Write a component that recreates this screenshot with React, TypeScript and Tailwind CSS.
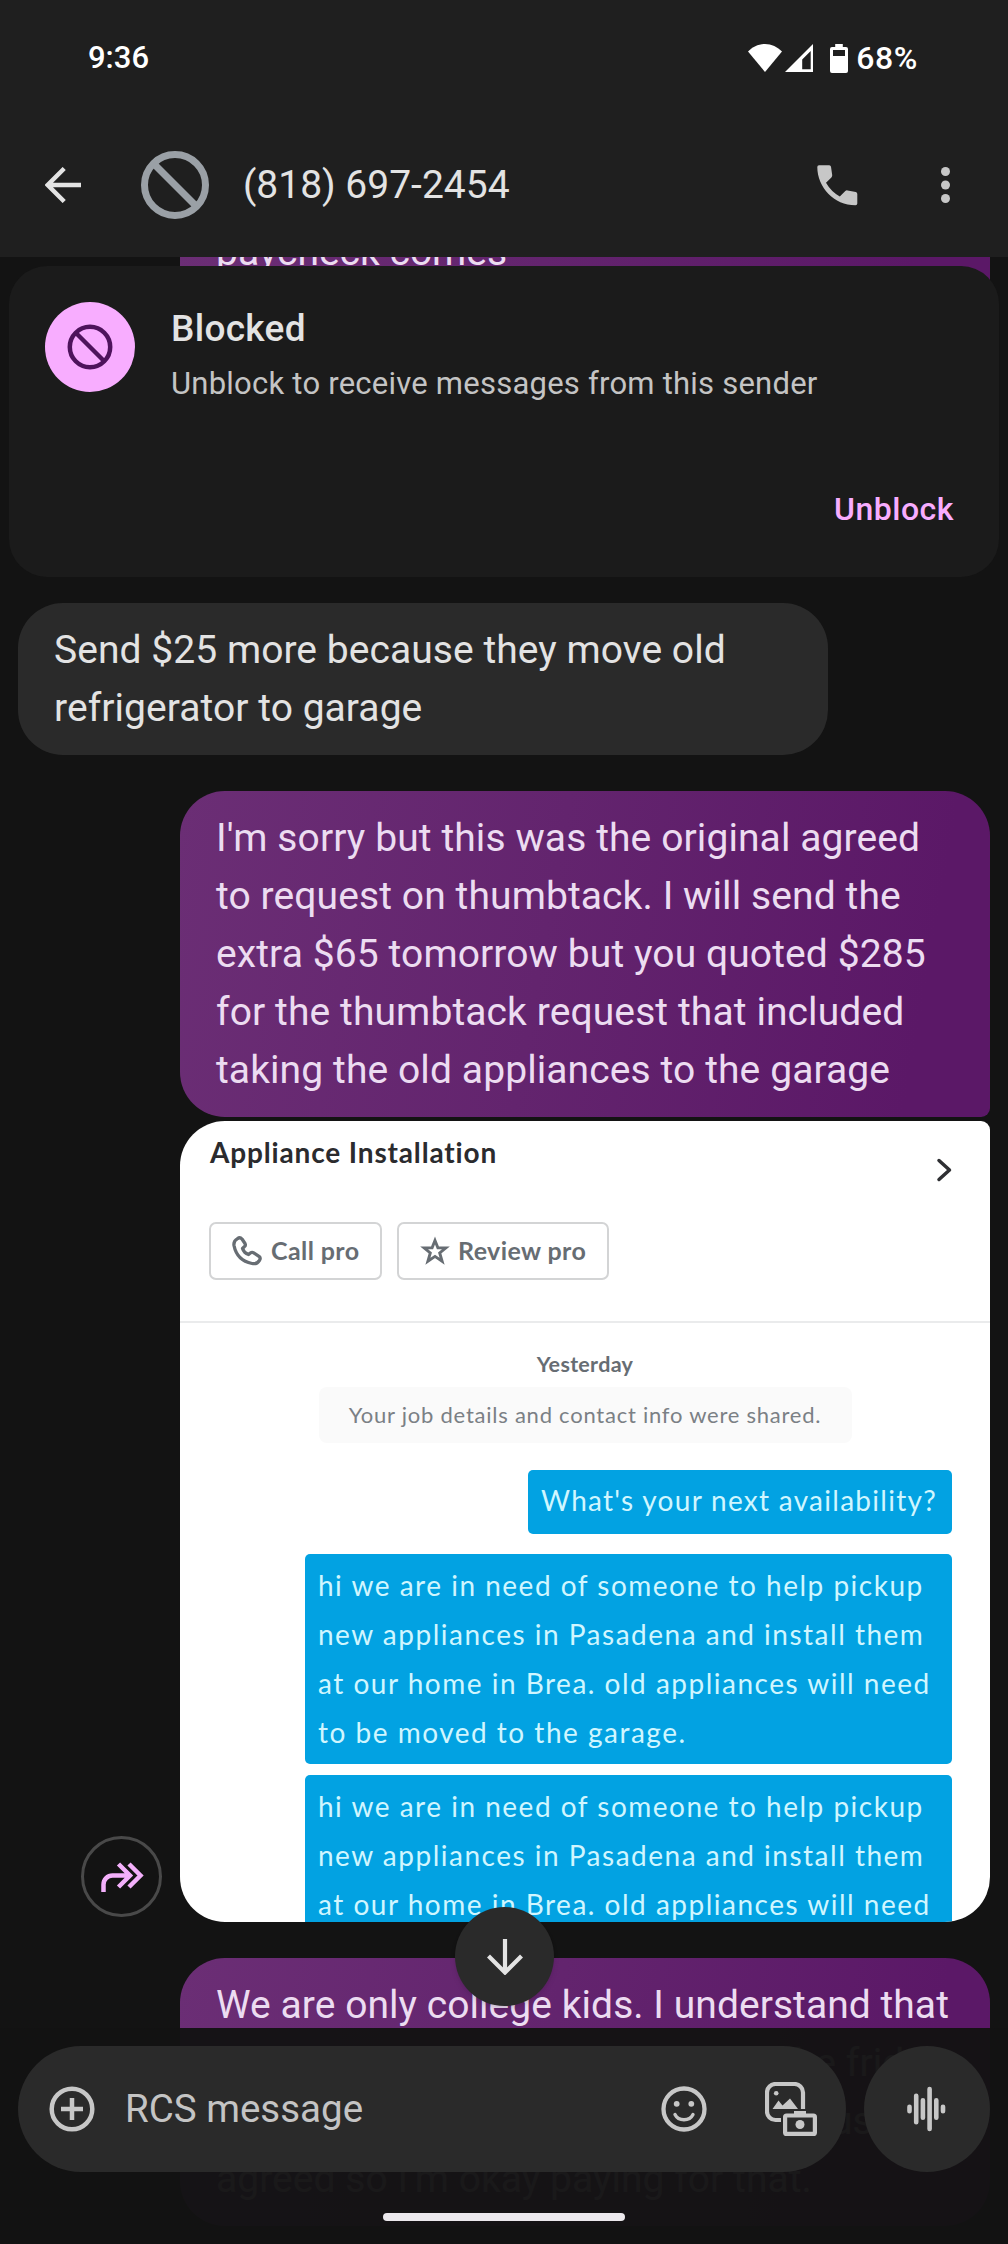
import React from "react";

const purple = "bg-[linear-gradient(100deg,#6b2e75_0%,#63246e_45%,#5b1867_90%)] text-[#ecdcf1]";

const Lines = ({ lines }: { lines: string[] }) => (
  <>
    {lines.map((line) => (
      <p key={line} className="whitespace-nowrap">
        {line}
      </p>
    ))}
  </>
);

const StatusBar = () => (
  <div className="flex h-[116px] items-center justify-between pl-[88px] pr-[90px] text-[31px] font-medium text-white">
    <span>9:36</span>
    <div className="flex items-center">
      <svg width="34" height="28" viewBox="0 0 34 28" fill="#fff">
        <path d="M17 28 0 7.5C4.500 3 10.500 0 17 0s12.500 3 17 7.500z" />
      </svg>
      <svg className="ml-[3px]" width="28" height="28" viewBox="0 0 28 28">
        <path fill="#fff" fillRule="evenodd" d="M28 0v28H0zM25.700 7 17.200 15.500v9.700h8.500z" />
      </svg>
      <svg className="ml-[17px]" width="18" height="29" viewBox="0 0 18 29">
        <path
          fill="#fff"
          fillRule="evenodd"
          d="M5.200 0h7.600v3H16a2 2 0 0 1 2 2v22a2 2 0 0 1-2 2H2a2 2 0 0 1-2-2V5a2 2 0 0 1 2-2h3.200zM3 6v6h12V6z"
        />
      </svg>
      <span className="ml-[8px] text-[32px] tracking-[0.600px]">68%</span>
    </div>
  </div>
);

const Header = () => (
  <header className="h-[257px] bg-[#1f1f1f]">
    <StatusBar />
    <div className="flex h-[138px] items-center pl-[45px] pr-[58px]">
      <svg width="36" height="36" viewBox="0 0 36 36" fill="none" stroke="#e3e3e3" strokeWidth="4.400">
        <path d="M36 18H3M19.200 1.500 2.700 18l16.500 16.500" />
      </svg>
      <svg className="ml-[60px]" width="68" height="68" viewBox="0 0 68 68" fill="none" stroke="#9aa0a6" strokeWidth="7">
        <circle cx="34" cy="34" r="30.500" />
        <path d="m12.500 12.500 43 43" />
      </svg>
      <h1 className="ml-[34px] text-[39px] text-[#e3e3e3]">(818) 697-2454</h1>
      <svg className="ml-auto" width="41" height="41" viewBox="0 0 41 41" fill="#c7c7c7">
        <path d="M2 .3H12.300Q13.700.3 14 1.800L15.200 10Q15.400 11.400 14.400 12.400L9 17.800Q14 26.500 22.800 31.600L28.300 26Q29.300 25.100 30.600 25.400L38.800 27Q40.300 27.400 40.300 28.900V38.500Q40.300 40.300 38.500 40.300C17 40.300.3 22 .3 2Q.3.3 2 .3Z" />
      </svg>
      <svg className="ml-[83px]" width="9" height="36" viewBox="0 0 9 36" fill="#c7c7c7">
        <circle cx="4.500" cy="4.500" r="4.500" />
        <circle cx="4.500" cy="18" r="4.500" />
        <circle cx="4.500" cy="31.500" r="4.500" />
      </svg>
    </div>
  </header>
);

const BlockedCard = () => (
  <section className="relative mx-[9px] -mt-[29px] flex h-[311px] rounded-[38px] bg-[#1b1b1b] pl-9 pr-[45px] pt-9">
    <div className="flex size-[90px] items-center justify-center rounded-full bg-[#f8adff]">
      <svg width="46" height="46" viewBox="0 0 46 46" fill="none" stroke="#4e135c" strokeWidth="4.500">
        <circle cx="23" cy="23" r="20.200" />
        <path d="m9 9 28 28" />
      </svg>
    </div>
    <div className="ml-9 flex flex-1 flex-col pt-[3px]">
      <h2 className="text-[37px] leading-[48px] font-medium tracking-[0.300px] text-[#e3e3e3]">Blocked</h2>
      <p className="mt-[9px] text-[31px] leading-[44px] tracking-[0.230px] text-[#c4c4c4]">
        Unblock to receive messages from this sender
      </p>
      <button className="mt-[83px] self-end text-[32px] leading-[40px] font-medium tracking-[0.500px] text-[#f8adff]">
        Unblock
      </button>
    </div>
  </section>
);

const requestLines = [
  "hi we are in need of someone to help pickup",
  "new appliances in Pasadena and install them",
  "at our home in Brea. old appliances will need",
  "to be moved to the garage.",
];

const Attachment = () => (
  <div className="flex h-[801px] w-[810px] flex-col overflow-hidden rounded-[45px] rounded-tr-[9px] bg-white font-['Lato',sans-serif]">
    <div className="flex h-[101px] shrink-0 justify-between pl-[30px] pr-[37px]">
      <h3 className="pt-[15px] text-[28px] leading-[32px] font-bold tracking-[0.850px] text-[#2b2b2e]">
        Appliance Installation
      </h3>
      <svg className="mt-[37px]" width="17" height="24" viewBox="0 0 17 24" fill="none" stroke="#2f3033" strokeWidth="3.500" strokeLinecap="round" strokeLinejoin="round">
        <path d="m3 2.500 10.500 9.500L3 21.500" />
      </svg>
    </div>
    <div className="flex gap-[15px] pl-[29px] text-[25px] font-bold tracking-[0.400px] text-[#676d73]">
      <div className="flex h-[58px] w-[173px] items-center gap-[9px] rounded-[7px] border-2 border-[#d3d4d5] pl-[21px]">
        <svg width="30" height="30" viewBox="0 0 30 30" fill="none" stroke="#676d73" strokeWidth="3.300" strokeLinejoin="round">
          <path d="M5.500 2.600Q8 .8 10 3L13 7.500Q14 9.500 12.300 10.800L10.500 12.500Q12 17 16.500 18.500L18.300 17Q20 15.800 21.700 16.800L27 20.300Q29 22 27.500 24.300Q25 28.500 20 27.500Q5 24.500 2 9.500Q1.300 5 5.500 2.600Z" />
        </svg>
        <span className="whitespace-nowrap">Call pro</span>
      </div>
      <div className="flex h-[58px] w-[212px] items-center gap-[8px] rounded-[7px] border-2 border-[#d3d4d5] pl-[21px]">
        <svg width="30" height="30" viewBox="0 0 30 30" fill="none" stroke="#676d73" strokeWidth="2.900">
          <path d="m15 4.500 2.900 7.200 8 .1-6.200 5.200 2.400 8.200-7.100-4.800-7.100 4.800 2.400-8.200-6.200-5.200 8-.1z" />
        </svg>
        <span className="whitespace-nowrap">Review pro</span>
      </div>
    </div>
    <hr className="mt-[41px] border-0 border-t-2 border-[#eaebec]" />
    <div className="flex flex-col items-center pt-[26px]">
      <p className="text-[21.500px] leading-[30px] font-bold tracking-[0.300px] text-[#676d73]">Yesterday</p>
      <p className="mt-2 h-14 w-[533px] rounded-lg bg-[#fafafa] text-center text-[22px] leading-[56px] tracking-[0.760px] text-[#7b8085]">
        Your job details and contact info were shared.
      </p>
    </div>
    <div className="mt-[27px] flex flex-col items-end pr-[38px] text-[28px] leading-[49px] tracking-[1.500px] text-[#d0f6ff]">
      <p className="h-16 w-[424px] rounded-[5px] bg-[#02a2e2] px-[13px] pt-[6px] tracking-[1.280px] whitespace-nowrap">
        What's your next availability?
      </p>
      <div className="mt-5 h-[210px] w-[647px] rounded-[5px] bg-[#02a2e2] px-[13px] pt-[7px]">
        <Lines lines={requestLines} />
      </div>
      <div className="mt-[11px] h-[210px] w-[647px] rounded-[5px] bg-[#02a2e2] px-[13px] pt-[7px]">
        <Lines lines={requestLines} />
      </div>
    </div>
  </div>
);

const ShareButton = () => (
  <button className="mb-[5px] flex size-[81px] items-center justify-center rounded-full border-3 border-[#494949]">
    <svg className="shrink-0" width="76" height="76" viewBox="0 0 76 76" fill="none" stroke="#f3b0fb" strokeWidth="4.500">
      <path d="M19.500 53V45.500a9 9 0 0 1 9-9H47M34.500 25 46 36.500 34.500 48M45 25l11.500 11.500L45 48" />
    </svg>
  </button>
);

const Conversation = () => (
  <main className="flex flex-col">
    <div className="ml-[180px] h-[38px] w-[810px] overflow-hidden">
      <div className={`${purple} -mt-[34px] h-[75px] pl-9 text-[39px] leading-[58px]`}>paycheck comes</div>
    </div>
    <BlockedCard />
    <div className="mt-[26px] ml-[18px] h-[152px] w-[810px] rounded-[45px] bg-[#2a2a2a] py-[18px] pl-9 text-[39px] leading-[58px] tracking-[0.050px] text-[#e3e3e3]">
      <Lines lines={["Send $25 more because they move old", "refrigerator to garage"]} />
    </div>
    <div
      className={`${purple} mt-9 ml-[180px] w-[810px] rounded-[45px] rounded-br-[9px] py-[18px] pl-9 text-[39px] leading-[58px] tracking-[0.100px]`}
    >
      <Lines
        lines={[
          "I'm sorry but this was the original agreed",
          "to request on thumbtack. I will send the",
          "extra $65 tomorrow but you quoted $285",
          "for the thumbtack request that included",
          "taking the old appliances to the garage",
        ]}
      />
    </div>
    <div className="mt-1 ml-[81px] flex items-end gap-[18px]">
      <ShareButton />
      <Attachment />
    </div>
    <div className={`${purple} mt-9 ml-[180px] h-[268px] w-[810px] rounded-[45px] py-[18px] pl-9 text-[39px] leading-[58px] tracking-[0.050px]`}>
      <p>We are only college kids. I understand that</p>
      <p className="pl-[565px]">the frid</p>
      <p className="pl-[615px]">us</p>
      <p>agreed so I'm okay paying for that.</p>
    </div>
  </main>
);

// Sits over the tail of the conversation, which shows faintly through it.
const Composer = () => (
  <footer className="absolute inset-x-0 bottom-0 flex h-[216px] flex-col items-center bg-[#131313]/97 pt-[18px]">
    <div className="flex w-[972px] justify-between">
      <div className="flex h-[126px] w-[828px] items-center rounded-full bg-[#2a2a2a] pl-[31px] pr-[29px]">
        <svg width="46" height="46" viewBox="0 0 46 46" fill="none" stroke="#c7c7c7" strokeWidth="4.500">
          <circle cx="23" cy="23" r="20.300" />
          <path d="M23 12v22M12 23h22" />
        </svg>
        <span className="ml-[30px] flex-1 text-[38.500px] text-[#c4c4c4]">RCS message</span>
        <svg width="46" height="46" viewBox="0 0 46 46" fill="none" stroke="#c7c7c7" strokeWidth="4.300">
          <circle cx="23" cy="23" r="20.500" />
          <circle cx="15.700" cy="17.800" r="2.900" fill="#c7c7c7" stroke="none" />
          <circle cx="30.300" cy="17.800" r="2.900" fill="#c7c7c7" stroke="none" />
          <path d="M14 28.500c3.500 7 14.500 7 18 0" strokeWidth="3.400" strokeLinecap="round" />
        </svg>
        <svg className="ml-[58px]" width="52" height="54" viewBox="0 0 52 54" fill="none" stroke="#c7c7c7" strokeWidth="4.200">
          <path d="M38 27V10.500A8.500 8.500 0 0 0 29.500 2H10.500A8.500 8.500 0 0 0 2 10.500V29.500A8.500 8.500 0 0 0 10.500 38H16" />
          <circle cx="11.200" cy="11.200" r="2.300" fill="#c7c7c7" stroke="none" />
          <path d="M7.500 27 13.500 18.500l4 5L25 16.500 33 27z" fill="#c7c7c7" stroke="none" />
          <rect x="20.100" y="33.500" width="29.800" height="18.400" rx="1.500" />
          <path d="M29 29h12v4H29z" fill="#c7c7c7" stroke="none" />
          <circle cx="35" cy="42.500" r="4.500" fill="#c7c7c7" stroke="none" />
        </svg>
      </div>
      <div className="flex size-[126px] items-center justify-center rounded-full bg-[#2a2a2a]">
        <svg width="40" height="46" viewBox="0 0 40 46" fill="none" stroke="#c7c7c7" strokeWidth="4.600" strokeLinecap="round">
          <path d="M2.500 20.800v4.400M9.200 9.800v26.400M15.900 14.200v17.600M22.600 3v40M29.300 14.200v17.600M36 20.800v4.400" />
        </svg>
      </div>
    </div>
    <div className="mt-[41px] h-2 w-[242px] rounded-full bg-[#ece9ed]" />
  </footer>
);

export default function App() {
  return (
    <div className="relative h-[2244px] w-[1008px] overflow-hidden bg-[#131313] font-['Roboto',sans-serif]">
      <Header />
      <Conversation />
      <Composer />
      <button className="absolute top-[1907px] left-[455px] flex size-[99px] items-center justify-center rounded-full bg-[#2a2a2a] shadow-md">
        <svg width="36" height="36" viewBox="0 0 36 36" fill="none" stroke="#e3e3e3" strokeWidth="4.200">
          <path d="M18 0v33M1.500 17 18 33.500 34.500 17" />
        </svg>
      </button>
    </div>
  );
}
